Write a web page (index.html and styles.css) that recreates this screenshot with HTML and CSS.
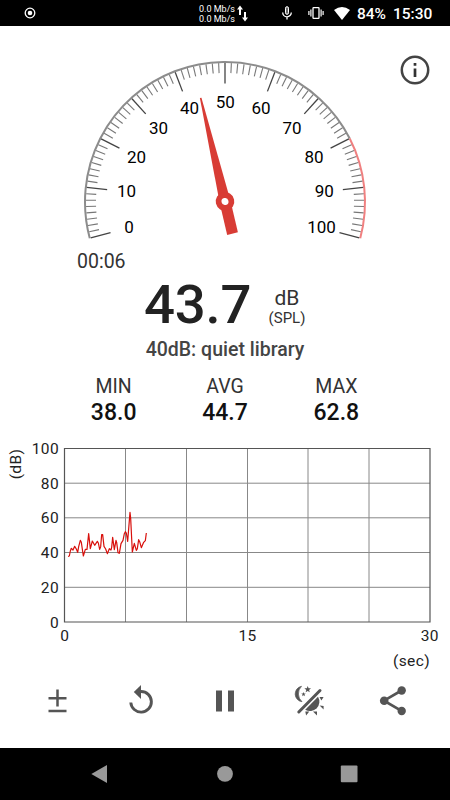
FILE: index.html
```html
<!DOCTYPE html>
<html lang="en">

<head>
    <meta charset="UTF-8">
    <link rel="stylesheet" href="styles.css">
    <title>Sound Meter</title>
</head>

<body>
    <div class="status">
        <svg class="record" width="12" height="12" viewBox="0 0 12 12">
            <circle cx="6" cy="6" r="4.8" fill="none" stroke="#fff" stroke-width="1.3" />
            <circle cx="6" cy="6" r="2.3" fill="#fff" />
        </svg>
        <div class="speed">
            <p>0.0 Mb/s</p>
            <p>0.0 Mb/s</p>
        </div>
        <svg class="arrows" width="11" height="17" viewBox="0 0 11 17">
            <path d="M3 .5L6 4.5H4V10H2V4.5H0zM8 16.5L5 12.5h2V7h2v5.500h2z" fill="#fff" />
        </svg>
        <svg class="mic" width="10" height="14" viewBox="0 0 10 14">
            <rect x="3.500" y=".7" width="3" height="7.600" rx="1.500" fill="#666" stroke="#fff" />
            <path d="M.7 6.500a4.300 4.300 0 0 0 8.600 0M5 10.800V13.500" fill="none" stroke="#fff" stroke-width="1.300" />
        </svg>
        <svg class="vibrate" width="16" height="14" viewBox="0 0 16 14">
            <rect x="5" y="1.700" width="6" height="10.600" rx=".6" fill="none" stroke="#fff" stroke-width="1.300" />
            <path d="M2.900 3.500v7M13.100 3.500v7M.9 5v4M15.100 5v4" stroke="#fff" stroke-width="1.200" />
        </svg>
        <svg class="wifi" width="16" height="13" viewBox="0 0 16 13">
            <path d="M0 3Q8-3 16 3L8 13z" fill="#fff" />
        </svg>
        <span class="battery">84%</span>
        <span class="clock">15:30</span>
    </div>

    <div class="gauge">
        <svg width="450" height="222" viewBox="0 26 450 222">
            <path class="arc" d="M89.770 238.230A140 140 0 0 1 349.740 138.440" />
            <path class="arc loud" d="M349.740 138.440A140 140 0 0 1 360.230 238.230" />
            <g id="ticks"></g>
            <g class="numbers">
                <text x="129" y="233">0</text>
                <text x="126.500" y="197">10</text>
                <text x="136.500" y="162.500">20</text>
                <text x="158.500" y="133.500">30</text>
                <text x="189.500" y="114">40</text>
                <text x="225.300" y="107.500">50</text>
                <text x="261" y="114">60</text>
                <text x="292" y="133.500">70</text>
                <text x="314" y="162.500">80</text>
                <text x="324.300" y="197">90</text>
                <text x="321.500" y="233">100</text>
            </g>
            <g class="needle" transform="rotate(-13.200 225 201.500)">
                <path d="M224.200 95h1.600L230.500 201.500V234.500h-11V201.500z" />
                <circle cx="225" cy="201.500" r="9.300" />
                <circle class="hole" cx="225" cy="201.500" r="3.500" />
            </g>
        </svg>
        <svg class="info" width="30" height="30" viewBox="0 0 30 30">
            <circle cx="15" cy="15" r="13.200" fill="none" stroke="#444" stroke-width="2.500" />
            <path d="M15 8v2.700M15 13.500v8.500" stroke="#333" stroke-width="2.700" />
        </svg>
    </div>

    <p class="time">00:06</p>
    <div class="reading">
        <h1 class="level">43.7</h1>
        <div class="unit">
            <p class="db">dB</p>
            <p class="spl">(SPL)</p>
        </div>
    </div>
    <p class="caption">40dB: quiet library</p>

    <div class="stats">
        <div class="col">
            <p>MIN</p>
            <p class="value">38.0</p>
        </div>
        <div class="col">
            <p>AVG</p>
            <p class="value">44.7</p>
        </div>
        <div class="col">
            <p>MAX</p>
            <p class="value">62.8</p>
        </div>
    </div>

    <svg class="chart" width="450" height="240" viewBox="0 0 450 240">
        <path class="grid" d="M64.500 48.200H430M64.500 82.800H430M64.500 117.500H430M64.500 152.300H430M125.500 13.500V187M186.500 13.500V187M247.500 13.500V187M308 13.500V187M369 13.500V187" />
        <path class="frame" d="M64.500 13.500H430V187H64.500z" />
        <g class="yaxis">
            <text x="59" y="18.700">100</text>
            <text x="59" y="53.500">80</text>
            <text x="59" y="88.200">60</text>
            <text x="59" y="123">40</text>
            <text x="59" y="157.700">20</text>
            <text x="59" y="192.500">0</text>
            <text x="430" y="230.500">(sec)</text>
        </g>
        <g class="xaxis">
            <text x="64.700" y="205.500">0</text>
            <text x="247.500" y="205.500">15</text>
            <text x="429.800" y="205.500">30</text>
            <text transform="translate(20.500 29) rotate(-90)">(dB)</text>
        </g>
        <polyline class="trace" transform="scale(.33333)" points="204,364 208,363 211,348 214,340 219,345 224,334 229,342 233,352 236,335 241,316 244,322 250,363 256,343 261,343 266,296 271,341 277,318 284,331 292,319 295,324 299,343 302,335 305,299 308,299 312,334 317,342 322,356 328,341 333,345 335,337 338,307 343,344 348,316 350,322 354,353 358,355 363,326 369,316 373,296 376,290 379,294 383,319 390,232 392,250 397,351 403,325 409,346 412,341 416,314 419,320 424,338 431,322 436,317 439,294" />
    </svg>

    <div class="toolbar">
        <svg width="32" height="32" viewBox="0 0 32 32">
            <path d="M7.500 13.200h18M16.500 4.500v17M7.500 26h18" stroke="#555" stroke-width="2.500" />
        </svg>
        <svg width="32" height="32" viewBox="0 0 32 32">
            <path d="M5.800 17.500A10.300 10.300 0 1 0 16 6.500" fill="none" stroke="#555" stroke-width="2.900" />
            <path d="M16 0v14L8.800 7z" fill="#555" />
        </svg>
        <svg width="32" height="32" viewBox="0 0 32 32">
            <path d="M7 5.500h6v21H7zM19 5.500h6v21h-6z" fill="#555" />
        </svg>
        <svg width="32" height="32" viewBox="0 0 32 32">
            <path d="M8.500 1.300A7.800 7.800 0 0 0 9 16.700A10.500 10.500 0 0 1 8.500 1.300z" fill="#555" stroke="#555" stroke-width=".7" />
            <path d="M14.700 .9l.9 2.300 2.400.1-1.900 1.600.7 2.400-2.100-1.400-2.100 1.400.7-2.400-1.900-1.600 2.400-.1z" fill="#555" />
            <path d="M10.500 7l.6 1.500 1.700.1-1.300 1 .4 1.700-1.400-1-1.400 1 .5-1.700-1.400-1 1.700-.1z" fill="#555" />
            <path d="M27 5.500L5.800 27" stroke="#555" stroke-width="3" stroke-linecap="round" />
            <path d="M25 11.800A9.400 9.400 0 0 1 12.200 24.800z" fill="#555" />
            <path d="M26.500 12h4.100l-2.200 3.500zM26.600 20.500l4 .4v3.600zM20 26.600h4v4zM12.300 26.600h4l-3.200 4z" fill="#555" />
        </svg>
        <svg width="32" height="32" viewBox="0 0 32 32">
            <path d="M24.500 5.500L7 15.700l17.500 10.200" fill="none" stroke="#555" stroke-width="2.700" />
            <circle cx="24.700" cy="5.500" r="4.200" fill="#555" />
            <circle cx="7.200" cy="15.700" r="4.300" fill="#555" />
            <circle cx="24.700" cy="26" r="4.200" fill="#555" />
        </svg>
    </div>

    <div class="nav">
        <svg width="18" height="20" viewBox="0 0 18 20">
            <path d="M.3 10L16 1v18z" />
        </svg>
        <svg width="18" height="20" viewBox="0 0 18 20">
            <circle cx="9" cy="9.800" r="7.900" />
        </svg>
        <svg width="18" height="20" viewBox="0 0 18 20">
            <rect x=".8" y="1.500" width="16.700" height="16.700" rx="1" />
        </svg>
    </div>

    <script>
        // 80 ticks over 210 degrees, every 8th one is a long one
        const ticks = document.querySelector("#ticks");
        let lines = "";
        for (let i = 0; i <= 80; i++) {
            const angle = -105 + i * 2.625;
            const major = i % 8 == 0;
            lines += `<line class="${major ? "tick major" : "tick"}" x1="225" x2="225" y1="63" y2="${major ? 83.5 : 73}" transform="rotate(${angle} 225 202)"/>`;
        }
        ticks.innerHTML = lines;
    </script>
</body>

</html>
```
FILE: styles.css
```css
* {
    margin: 0;
    padding: 0;
    box-sizing: border-box;
}

body {
    width: 450px;
    height: 800px;
    overflow: hidden;
    background-color: white;
    color: #222;
    font-family: Roboto, sans-serif;
    display: flex;
    flex-direction: column;
}

svg {
    display: block;
    flex-shrink: 0;
}

.status {
    height: 26px;
    background-color: black;
    color: white;
    display: flex;
    align-items: center;
    padding-left: 24px;
}

.speed {
    width: 36px;
    margin-left: 163px;
    padding-top: 2px;
    font-size: 9px;
    line-height: 10px;
    white-space: nowrap;
}

.arrows {
    margin-left: 2px;
}

.mic {
    margin-left: 34px;
}

.vibrate {
    margin-left: 16px;
}

.wifi {
    margin-left: 10px;
}

.battery,
.clock {
    font-size: 15.5px;
    font-weight: 500;
    line-height: 26px;
    padding-top: 2px;
}

.battery {
    width: 29px;
    margin-left: 7px;
}

.clock {
    margin-left: 7px;
}

.gauge {
    position: relative;
    height: 222px;
}

.info {
    position: absolute;
    top: 29px;
    right: 20px;
}

.arc {
    fill: none;
    stroke: #8c8c8c;
    stroke-width: 2;
}

.loud {
    stroke: #f08080;
}

.tick {
    stroke: #777;
    stroke-width: 1.1;
}

.major {
    stroke: #444;
    stroke-width: 1.3;
}

.numbers {
    font-size: 17px;
    fill: #000;
    text-anchor: middle;
}

.needle {
    fill: #d83c35;
}

.hole {
    fill: white;
}

.time {
    padding: 1px 0 0 77px;
    font-size: 19.5px;
    line-height: 26px;
    color: #333;
}

.reading {
    display: flex;
    height: 60px;
    padding-left: 144px;
}

.level {
    width: 124px;
    font-size: 54.5px;
    letter-spacing: -0.2px;
    font-weight: 500;
    line-height: 59px;
}

.unit {
    width: 38px;
    padding-top: 12px;
    text-align: center;
}

.db {
    font-size: 21px;
    line-height: 22px;
    color: #333;
}

.spl {
    font-size: 15px;
    line-height: 18px;
    color: #333;
}

.caption {
    margin-top: 2px;
    font-size: 19.5px;
    font-weight: 500;
    line-height: 26px;
    text-align: center;
    color: #444;
}

.stats {
    width: 334px;
    margin: 11px auto 0;
    display: flex;
}

.col {
    flex: 1;
    text-align: center;
    font-size: 19.5px;
    line-height: 26px;
    color: #333;
}

.value {
    font-size: 23px;
    font-weight: 500;
    line-height: 25px;
    color: #111;
}

.chart {
    margin-top: 10px;
}

.grid {
    stroke: #888;
    stroke-width: 1;
}

.frame {
    fill: none;
    stroke: #555;
    stroke-width: 1.2;
}

.yaxis,
.xaxis {
    font-size: 15.5px;
    letter-spacing: 0.4px;
    fill: #222;
}

.yaxis {
    text-anchor: end;
}

.xaxis {
    text-anchor: middle;
}

.trace {
    fill: none;
    stroke: #d8100c;
    stroke-width: 3.6;
    stroke-linejoin: round;
}

.toolbar {
    height: 73px;
    padding: 10px 15px 0;
    display: grid;
    grid-template-columns: repeat(5, 1fr);
    justify-items: center;
}

.nav {
    height: 52px;
    background-color: black;
    display: flex;
    justify-content: space-between;
    align-items: center;
    padding: 0 92px 0 91px;
    fill: #999;
}
```
